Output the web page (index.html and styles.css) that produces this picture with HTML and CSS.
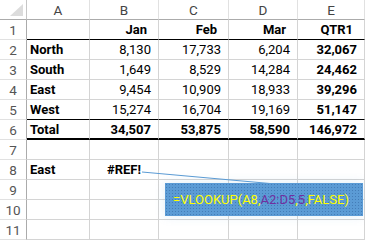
FILE: index.html
```html
<!DOCTYPE html>
<html>
<head>
<meta charset="utf-8">
<link rel="stylesheet" href="styles.css">
</head>
<body>
<div class="sheet">
  <div class="grid">
    <div class="corner"><span class="tri"></span></div>
    <div class="ch">A</div><div class="ch">B</div><div class="ch">C</div><div class="ch">D</div><div class="ch">E</div>

    <div class="rh">1</div>
    <div class="c b-under"></div><div class="c r bold hd b-under">Jan</div><div class="c r bold hd b-under">Feb</div><div class="c r bold hd b-under">Mar</div><div class="c r bold hd b-under">QTR1</div>

    <div class="rh">2</div>
    <div class="c bold">North</div><div class="c r">8,130</div><div class="c r">17,733</div><div class="c r">6,204</div><div class="c r bold">32,067</div>

    <div class="rh">3</div>
    <div class="c bold">South</div><div class="c r">1,649</div><div class="c r">8,529</div><div class="c r">14,284</div><div class="c r bold">24,462</div>

    <div class="rh">4</div>
    <div class="c bold">East</div><div class="c r">9,454</div><div class="c r">10,909</div><div class="c r">18,933</div><div class="c r bold">39,296</div>

    <div class="rh">5</div>
    <div class="c bold b-under">West</div><div class="c r b-under">15,274</div><div class="c r b-under">16,704</div><div class="c r b-under">19,169</div><div class="c r bold b-under">51,147</div>

    <div class="rh">6</div>
    <div class="c bold b-thick">Total</div><div class="c r bold b-thick">34,507</div><div class="c r bold b-thick">53,875</div><div class="c r bold b-thick">58,590</div><div class="c r bold b-thick">146,972</div>

    <div class="rh">7</div>
    <div class="c"></div><div class="c"></div><div class="c"></div><div class="c"></div><div class="c"></div>

    <div class="rh">8</div>
    <div class="c bold">East</div><div class="c ctr bold">#REF!</div><div class="c"></div><div class="c"></div><div class="c"></div>

    <div class="rh">9</div>
    <div class="c"></div><div class="c"></div><div class="c"></div><div class="c"></div><div class="c"></div>

    <div class="rh">10</div>
    <div class="c"></div><div class="c"></div><div class="c"></div><div class="c"></div><div class="c"></div>

    <div class="rh">11</div>
    <div class="c"></div><div class="c"></div><div class="c"></div><div class="c"></div><div class="c"></div>
  </div>

  <svg class="leader" width="365" height="240" viewBox="0 0 365 240">
    <line x1="142" y1="172" x2="270" y2="183.5" stroke="#5b9bd5" stroke-width="1"/>
  </svg>
  <div class="callout"><span class="y">=VLOOKUP(A8,</span><span class="p">A2:D5</span><span class="y">,</span><span class="p">5</span><span class="y">,FALSE)</span></div>
</div>
</body>
</html>
```

FILE: styles.css
```css
html, body {
  margin: 0;
  padding: 0;
  background: #ffffff;
  overflow: hidden;
}

.sheet {
  position: relative;
  width: 365px;
  height: 240px;
  font-family: Roboto, "Liberation Sans", sans-serif;
  font-size: 13px;
  color: #000;
}

.grid {
  display: grid;
  grid-template-columns: 27px 63px 69px 70px 69px 67px;
  grid-auto-rows: 20px;
}

.grid > div {
  box-sizing: border-box;
  border-right: 1px solid #d4d4d4;
  border-bottom: 1px solid #d4d4d4;
  display: flex;
  align-items: center;
  white-space: nowrap;
  overflow: hidden;
}

.corner {
  position: relative;
  border-right-color: #c6c6c6 !important;
  border-bottom-color: #ababab !important;
}

.tri {
  position: absolute;
  right: 3px;
  bottom: 3px;
  width: 0;
  height: 0;
  border-left: 13px solid transparent;
  border-bottom: 12px solid #dcdcdc;
}

.ch {
  justify-content: center;
  color: #444;
  font-size: 13.5px;
  border-right-color: #e1e1e1 !important;
  border-bottom-color: #ababab !important;
}

.rh {
  justify-content: center;
  color: #555;
  font-size: 13.5px;
  border-right-color: #ababab !important;
  border-bottom-color: #e1e1e1 !important;
}

.c {
  padding: 0 3px;
}

.r {
  justify-content: flex-end;
  padding-right: 7px;
}

.hd {
  padding-right: 11px;
}

.ctr {
  justify-content: center;
}

.bold {
  font-weight: 700;
}

.b-under {
  border-bottom-color: #000 !important;
}

.b-thick {
  border-bottom: 2px solid #000 !important;
}

.leader {
  position: absolute;
  left: 0;
  top: 0;
  pointer-events: none;
}

.callout {
  position: absolute;
  left: 165px;
  top: 183px;
  width: 198px;
  height: 33px;
  box-sizing: border-box;
  padding-left: 8px;
  display: flex;
  align-items: center;
  background-color: #5b9bd5;
  background-image: radial-gradient(circle, rgba(40, 90, 150, 0.45) 0.6px, transparent 0.9px);
  background-size: 3px 3px;
  box-shadow: 0 0 10px rgba(91, 155, 213, 0.18);
  font-family: Roboto, "Liberation Sans", sans-serif;
  font-size: 13px;
  white-space: nowrap;
}

.y { color: #ffff00; }
.p { color: #7030a0; }
```
